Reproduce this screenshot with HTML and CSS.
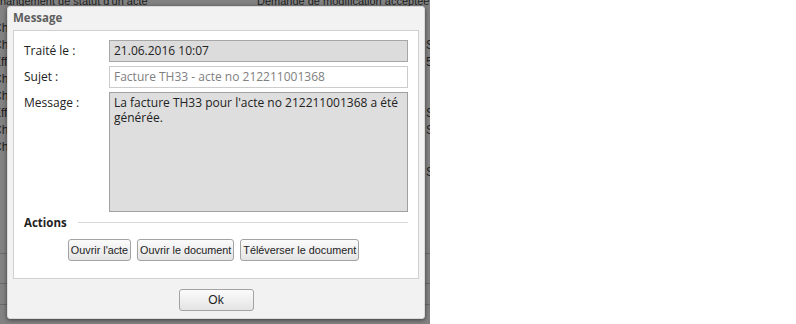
FILE: index.html
```html
<!DOCTYPE html>
<html lang="fr">
<head>
<meta charset="utf-8">
<title>Message</title>
<link rel="stylesheet" href="styles.css">
</head>
<body>
<div class="screen">
  <div class="bg">
    <div class="bg-row first"><span class="c1 wide">Changement de statut d'un acte</span><span class="c2">Demande de modification acceptée</span></div>
    <div class="bg-row"><span class="c1">Ch</span><span class="c3"></span></div>
    <div class="bg-row"><span class="c1">Ch</span><span class="c3">S</span></div>
    <div class="bg-row"><span class="c1">Eff</span><span class="c3">5</span></div>
    <div class="bg-row"><span class="c1">Ch</span><span class="c3"></span></div>
    <div class="bg-row"><span class="c1">Ch</span><span class="c3"></span></div>
    <div class="bg-row"><span class="c1">Eff</span><span class="c3">S</span></div>
    <div class="bg-row"><span class="c1">Ch</span><span class="c3">S</span></div>
    <div class="bg-row"><span class="c1">Ch</span><span class="c3"></span></div>
    <div class="bg-row"><span class="c1"></span><span class="c3"></span></div>
    <div class="bg-row half"><span class="c1"></span><span class="c3">S</span></div>
    <div class="bg-lines">
      <div class="bg-line l1"></div>
      <div class="bg-line l2"></div>
      <div class="bg-line l3"></div>
    </div>

    <div class="dialog">
      <div class="dialog-title">Message</div>
      <div class="panel">
        <div class="form">
          <div class="label">Traité le :</div>
          <div class="field disabled">21.06.2016 10:07</div>
          <div class="label">Sujet :</div>
          <div class="field readonly">Facture TH33 - acte no 212211001368</div>
          <div class="label">Message :</div>
          <div class="field area">La facture TH33 pour l'acte no 212211001368 a été générée.</div>
        </div>
        <div class="legend"><span class="legend-text">Actions</span><span class="legend-line"></span></div>
        <div class="actions">
          <button class="btn">Ouvrir l'acte</button>
          <button class="btn">Ouvrir le document</button>
          <button class="btn">Téléverser le document</button>
        </div>
      </div>
      <div class="footer">
        <button class="btn ok">Ok</button>
      </div>
    </div>
  </div>
</div>
</body>
</html>
```
FILE: styles.css
```css
html, body {
  margin: 0;
  padding: 0;
  background: #ffffff;
}

.screen {
  width: 796px;
  height: 324px;
  display: flex;
}

.bg {
  position: relative;
  flex-shrink: 0;
  width: 430px;
  height: 324px;
  background: #828282;
  overflow: hidden;
  font-family: "Liberation Sans", Arial, sans-serif;
  font-size: 12px;
  color: #1e1e1e;
}

.bg-row {
  display: flex;
  justify-content: space-between;
  height: 17px;
  line-height: 17px;
  white-space: nowrap;
}

.bg-row.half {
  margin-top: -9px;
}

.bg-row.first {
  justify-content: flex-start;
  height: 14px;
  line-height: 12px;
  font-size: 11px;
  margin-top: -5px;
  margin-bottom: 11px;
}

.c1 {
  flex-shrink: 0;
  width: 14px;
  margin-left: -7px;
  overflow: hidden;
}

.c1.wide {
  width: 265px;
  margin-left: -8px;
}

.c2 {
  flex-shrink: 0;
  width: 172px;
}

.c3 {
  flex-shrink: 0;
  width: 4px;
  overflow: hidden;
}

.bg-lines {
  display: flex;
  flex-direction: column;
}

.bg-line {
  height: 1px;
  background: #6a6a6a;
}

.l1 { margin-top: 72px; }
.l2 { margin-top: 29px; }
.l3 { margin-top: 20px; }

/* dialog */
.dialog {
  position: absolute;
  left: 7px;
  top: 6px;
  width: 406px;
  height: 311px;
  padding: 0 5px;
  border: 1px solid #dadada;
  border-radius: 3px;
  background: #f2f2f2;
  box-shadow: 0 1px 4px rgba(0, 0, 0, 0.55);
  display: flex;
  flex-direction: column;
  font-family: "Open Sans", "Noto Sans", sans-serif;
  color: #222;
}

.dialog-title {
  height: 23px;
  line-height: 22px;
  font-weight: bold;
  font-size: 11.5px;
  color: #5e5e5e;
}

.panel {
  box-sizing: border-box;
  height: 249px;
  border: 1px solid #d0d0d0;
  background: #ffffff;
  padding: 9px 10px 0 10px;
  display: flex;
  flex-direction: column;
}

.form {
  display: grid;
  grid-template-columns: 85px 299px;
  row-gap: 4px;
}

.label {
  font-size: 12px;
  line-height: 22px;
  color: #222;
}

.field {
  box-sizing: border-box;
  height: 22px;
  padding: 0 4px;
  font-size: 12px;
  line-height: 20px;
  border: 1px solid #a9a9a9;
  white-space: nowrap;
}

.field.disabled {
  background: #dcdcdc;
  border-color: #a6a6a6;
  color: #222;
}

.field.readonly {
  background: #ffffff;
  border-color: #cccccc;
  color: #808080;
}

.field.area {
  height: 120px;
  background: #dedede;
  border-color: #a0a0a0;
  padding: 2px 4px;
  line-height: 15px;
  white-space: normal;
  color: #222;
}

.legend {
  display: flex;
  align-items: center;
  margin-top: 2px;
  height: 17px;
}

.legend-text {
  font-weight: bold;
  font-size: 11.5px;
  color: #222;
}

.legend-line {
  flex: 1;
  height: 1px;
  background: #d8d8d8;
  margin-left: 11px;
}

.actions {
  display: flex;
  justify-content: center;
  gap: 6px;
  margin-top: 8px;
  padding-right: 5px;
}

.btn {
  box-sizing: border-box;
  height: 22px;
  padding: 0 2px;
  border: 1px solid #a3a3a3;
  border-radius: 3px;
  background: linear-gradient(#fbfbfb, #e4e4e4);
  font-family: "Liberation Sans", Arial, sans-serif;
  font-size: 10.8px;
  color: #222;
  line-height: 20px;
}

.footer {
  flex: 1;
  display: flex;
  justify-content: center;
  padding-top: 10px;
}

.btn.ok {
  width: 75px;
  font-size: 12px;
}
```
